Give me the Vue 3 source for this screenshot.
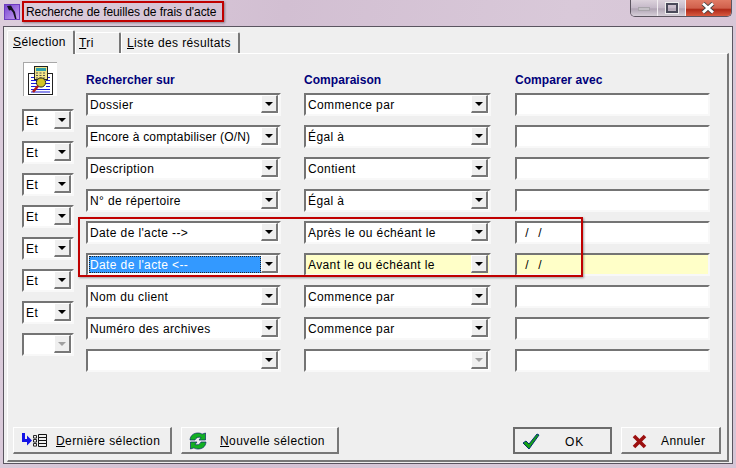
<script setup>
const ets = ['Et','Et','Et','Et','Et','Et','Et','']
const rows = [
  { f:'Dossier', c:'Commence par' },
  { f:'Encore à comptabiliser (O/N)', c:'Égal à', tight:true },
  { f:'Description', c:'Contient' },
  { f:'N° de répertoire', c:'Égal à' },
  { f:"Date de l'acte -->", c:'Après le ou échéant le', v:' /  /' },
  { f:"Date de l'acte <--", c:'Avant le ou échéant le', v:' /  /', active:true },
  { f:'Nom du client', c:'Commence par' },
  { f:'Numéro des archives', c:'Commence par' },
  { f:'', c:'', off:true },
]
</script>

<template>
  <div class="window">
    <header class="titlebar">
      <svg class="appicon" width="16" height="16" viewBox="0 0 16 16">
        <defs>
          <linearGradient id="ai" x1="0" y1="0" x2="1" y2="1"><stop offset="0" stop-color="#7a48d0"/><stop offset="1" stop-color="#c49af0"/></linearGradient>
        </defs>
        <rect width="16" height="16" fill="#6e3cc0"/>
        <rect x="1" y="1" width="14" height="14" fill="url(#ai)"/>
        <path d="M3 2 L7 1.5 L9 5 L11 8 L12.5 15 L11 15 L9 8.5 L7 6 L5 6.5 Z" fill="#151020"/>
      </svg>
      <span class="title">Recherche de feuilles de frais d'acte</span>
      <div class="controls">
        <div class="ctl"><span class="min"></span></div>
        <div class="ctl"><span class="max"></span></div>
        <div class="ctl close">
          <svg width="14" height="12" viewBox="0 0 14 12"><path d="M2 1.5 L12 10.5 M12 1.5 L2 10.5" stroke="#444" stroke-width="4.4"/><path d="M2 1.5 L12 10.5 M12 1.5 L2 10.5" stroke="#fff" stroke-width="2.8"/></svg>
        </div>
      </div>
    </header>

    <div class="client">
      <nav class="tabs">
        <div class="tab on"><u>S</u>élection</div>
        <div class="tab tri"><u>T</u>ri</div>
        <div class="tab liste"><u>L</u>iste des résultats</div>
      </nav>
      <section class="panel">
        <div class="grid">
          <div class="col-et">
            <div class="bigicon">
              <svg width="33" height="33" viewBox="0 0 33 33">
                <rect x="4.5" y="10.5" width="24" height="21" fill="#fff" stroke="#222"/>
                <path d="M7 14.5h19M7 17.5h6M7 20.5h6M7 23.5h6M7 26.5h19M7 29h19M22 17.5h4M22 20.5h4M22 23.5h4" stroke="#1a1ad8"/>
                <rect x="10.5" y="3.5" width="13" height="13" fill="#f2e488" stroke="#222"/>
                <rect x="12" y="5" width="10" height="3" fill="#2f9fa8"/>
                <path d="M12 10h2M15.5 10h2M19 10h2M12 12.5h2M15.5 12.5h2M19 12.5h2M12 15h2M15.5 15h2M19 15h2" stroke="#555"/>
                <circle cx="17" cy="19.5" r="4.6" fill="#d4c428" stroke="#222"/>
                <path d="M14 23 L9 29" stroke="#b01818" stroke-width="2.6"/>
              </svg>
            </div>
            <div v-for="(e,i) in ets" :key="i" class="combo">
              <span class="val">{{ e }}</span>
              <span class="btn" :class="{ dim: !e }"><i></i></span>
            </div>
          </div>

          <div class="col wide">
            <h4>Rechercher sur</h4>
            <div v-for="(r,i) in rows" :key="i" class="combo">
              <span class="val" :class="{ sel: r.active, tight: r.tight }">{{ r.f }}</span>
              <span class="btn"><i></i></span>
            </div>
          </div>

          <div class="col mid">
            <h4>Comparaison</h4>
            <div v-for="(r,i) in rows" :key="i" class="combo" :class="{ yellow: r.active }">
              <span class="val">{{ r.c }}</span>
              <span class="btn" :class="{ dim: r.off }"><i></i></span>
            </div>
          </div>

          <div class="col wide">
            <h4>Comparer avec</h4>
            <div v-for="(r,i) in rows" :key="i" class="combo input" :class="{ yellow: r.active }">
              <span class="val date">{{ r.v }}</span>
            </div>
          </div>
        </div>

        <footer class="footer">
          <button class="b b1">
            <svg width="26" height="16" viewBox="0 0 26 16">
              <path d="M1 0 h3 v6 h2 V2.5 L11 7.5 L6 12.5 V9 H1 Z" fill="#1414e6"/>
              <path d="M12.5 2.5h3v2.6h-3zM12.5 6.5h3v2.6h-3zM12.5 10.5h3v2.6h-3z" fill="none" stroke="#111" stroke-width=".9"/>
              <path d="M17.5 1.5h8v3h-8zM17.5 4.5h8v3h-8zM17.5 7.5h8v3h-8zM17.5 10.5h8v3h-8z" fill="none" stroke="#111"/>
            </svg>
            <span class="lbl l1"><u>D</u>ernière sélection</span>
          </button>
          <button class="b b2">
            <svg width="18" height="18" viewBox="0 0 18 18">
              <path d="M1 8 C1.5 3 5 1 9 1 C11 1 12.5 1.6 13 2.2 L16.5 1 V8 H10 L12 5.5 C9.5 4.6 7 5.4 6 8 Z" fill="#12b022" stroke="#0a2a6a" stroke-width=".7"/>
              <path d="M17 10 C16.5 15 13 17 9 17 C7 17 5.5 16.4 5 15.8 L1.5 17 V10 H8 L6 12.5 C8.5 13.4 11 12.6 12 10 Z" fill="#12b022" stroke="#0a2a6a" stroke-width=".7"/>
            </svg>
            <span class="lbl l2"><u>N</u>ouvelle sélection</span>
          </button>
          <span class="spacer"></span>
          <button class="b ok">
            <svg width="18" height="17" viewBox="0 0 18 17"><path d="M1 10 L4 8 L7 11 L15 1 L17 2 L7 16 Z" fill="#16a016" stroke="#003070" stroke-width="1"/></svg>
            <span class="lbl l3">OK</span>
          </button>
          <button class="b cancel">
            <svg width="15" height="15" viewBox="0 0 15 15"><path d="M2 2 L13 13 M13 2 L2 13" stroke="#9c0f0f" stroke-width="3.6"/></svg>
            <span class="lbl l4">Annuler</span>
          </button>
        </footer>
      </section>
    </div>

    <div class="mark m1"></div>
    <div class="mark m2"></div>
  </div>
</template>

<style>
html, body { margin: 0; background: #d8c8d8; }
</style>

<style scoped>
* { box-sizing: border-box; }
.window {
  position: relative; width: 736px; height: 468px; overflow: hidden;
  display: flex; flex-direction: column;
  background: linear-gradient(100deg, #dccddc 0%, #d2bfd2 35%, #d9c9d9 70%, #d6c5d6 100%);
  font: 12px "Liberation Sans", Arial, sans-serif; color: #000;
  letter-spacing: .38px;
}
.titlebar { height: 26px; display: flex; align-items: flex-start; padding-left: 4px; flex: none; }
.appicon { margin-top: 4px; }
.title { margin: 5px 0 0 6px; line-height: 15px; letter-spacing: -.07px; }
.controls { margin-left: auto; margin-right: 4px; display: flex; height: 17px; width: 102px;
  border: 1px solid #5c5560; border-top: 0; border-radius: 0 0 5px 5px; overflow: hidden; }
.ctl { width: 28px; display: flex; align-items: center; justify-content: center;
  background: linear-gradient(#dcd2dc, #c4b8c8 50%, #b0a4b4 55%, #d6cfd8); border-right: 1px solid #f2eef2; }
.close { width: 46px; border: 0; background: linear-gradient(#e07a64, #d0604c 50%, #b02a18 60%, #d85a40); }
.min { width: 12px; height: 4px; background: #c4c0c6; border: 1px solid #a8a4aa; margin-top: 1px; }
.max { width: 12px; height: 10px; border: 2px solid #4a4a5a; box-shadow: 0 0 0 1px #eee; }

.client { flex: 1; display: flex; flex-direction: column; margin: 0 3px 4px 3px;
  background: #efefef; border: 1px solid #5a5560; padding: 3px 3px 1px 3px; }
.tabs { display: flex; height: 23px; flex: none; position: relative; z-index: 1; }
.tab { height: 21px; margin-top: 2px; background: #efefef; border: 1px solid #fff; border-right: 2px solid #777;
  border-bottom: 0; padding: 3px 0 0 5px; line-height: 14px; border-radius: 2px 2px 0 0; }
.tab.on { width: 68px; height: 24px; margin-top: 0; padding-left: 5px; padding-top: 4px; }
.tab.tri { width: 46px; padding-left: 3px; }
.tab.liste { width: 119px; padding-left: 5px; }

.panel { flex: 1; display: flex; flex-direction: column; background: #efefef;
  border: 1px solid #fff; border-right: 2px solid #777; border-bottom: 2px solid #777; }
.grid { display: flex; padding-left: 14px; }
.col-et { width: 52px; margin-right: 12px; display: flex; flex-direction: column; gap: 9px; padding-top: 8px; }
.bigicon { width: 34px; height: 34px; margin: 0 0 4px 1px; background: #fff; border-top: 1px solid #a8a8a8; border-left: 1px solid #a8a8a8; display: flex; }
.col { display: flex; flex-direction: column; gap: 9px; padding-top: 19px; }
.col.wide { width: 195px; }
.col.mid { width: 187px; margin: 0 24px 0 23px; }
h4 { margin: 0; height: 11px; font-size: 12px; line-height: 14px; color: #00007a; font-weight: bold; letter-spacing: .05px; }

.combo { height: 23px; display: flex; flex: none; background: #fff; padding: 0;
  border: 2px solid #f8f8f8; border-top-color: #747474; border-left-color: #747474; }
.combo.yellow { background: #ffffc8; }
.val { flex: 1; min-width: 0; line-height: 21px; padding-left: 2px; white-space: pre; }
.val.tight { letter-spacing: .2px; }
.val.sel { background: #3399ff; color: #fff; outline: 1px dotted #222; outline-offset: -1px; margin: 1px 0 1px 1px; line-height: 19px; padding-left: 1px; }
.val.date { padding-left: 4px; letter-spacing: 1px; }
.btn { width: 17px; margin: 0 1px 1px 0; flex: none; background: #efefef;
  border: 1px solid #fff; border-right: 2px solid #777; border-bottom: 2px solid #777;
  display: flex; align-items: center; justify-content: center; }
.btn i { width: 0; height: 0; border: 4px solid transparent; border-top: 4px solid #000; border-bottom: 0; }
.btn.dim i { border-top-color: #a0a0a0; }

.footer { margin-top: auto; display: flex; gap: 9px; padding: 0 6px 6px 5px; }
.spacer { flex: 1; }
.b { height: 27px; display: flex; align-items: center; padding: 2px 0 0; background: #efefef;
  font: inherit; letter-spacing: .42px; color: #000;
  border: 1px solid #fff; border-right: 2px solid #777; border-bottom: 2px solid #777; }
.b1 { width: 159px; padding-left: 7px; }
.b2 { width: 158px; padding-left: 7px; }
.ok { width: 99px; padding-left: 7px; border: 2px solid #6c6c6c; }
.cancel { width: 100px; padding-left: 10px; }
.lbl { white-space: nowrap; }
.l1 { margin-left: 9px; }
.l2 { margin-left: 13px; }
.l3 { margin-left: 25px; letter-spacing: 1px; }
.l4 { margin-left: 14px; }

.mark { position: absolute; border: 2px solid #c00000; box-shadow: 1px 1px 2px rgba(0,0,0,.35); pointer-events: none; }
.m1 { left: 22px; top: 1px; width: 202px; height: 21px; }
.m2 { left: 78px; top: 217px; width: 505px; height: 60px; }
</style>
